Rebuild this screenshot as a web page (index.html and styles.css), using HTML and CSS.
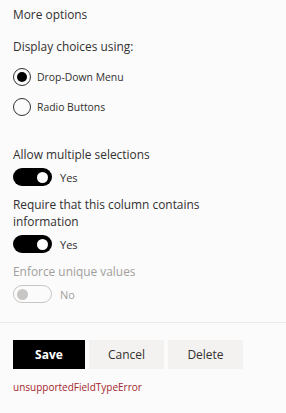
FILE: index.html
```html
<!DOCTYPE html>
<html>
<head>
<meta charset="utf-8">
<link rel="stylesheet" href="styles.css">
</head>
<body>
<div class="scroll">
  <div class="content">
    <div class="heading">More options</div>
    <div class="group-label">Display choices using:</div>
    <div class="choices">
      <div class="choice"><span class="radio checked"></span><span class="choice-text">Drop-Down Menu</span></div>
      <div class="choice"><span class="radio"></span><span class="choice-text">Radio Buttons</span></div>
    </div>
    <div class="field first">
      <div class="label">Allow multiple selections</div>
      <div class="toggle-row"><span class="toggle on"><span class="knob"></span></span><span class="state">Yes</span></div>
    </div>
    <div class="field">
      <div class="label">Require that this column contains information</div>
      <div class="toggle-row"><span class="toggle on"><span class="knob"></span></span><span class="state">Yes</span></div>
    </div>
    <div class="field disabled">
      <div class="label">Enforce unique values</div>
      <div class="toggle-row"><span class="toggle off"><span class="knob"></span></span><span class="state">No</span></div>
    </div>
  </div>
</div>
<div class="footer">
  <div class="buttons">
    <button class="btn primary">Save</button>
    <button class="btn">Cancel</button>
    <button class="btn">Delete</button>
  </div>
  <div class="error">unsupportedFieldTypeError</div>
</div>
</body>
</html>
```
FILE: styles.css
```css
html, body {
  margin: 0;
  padding: 0;
  background: #fbfbfb;
}
body {
  font-family: "Open Sans", "Noto Sans", sans-serif;
  color: #323130;
  font-size: 11.9px;
}
.scroll {
  height: 323px;
  overflow-y: scroll;
  border-bottom: 1px solid #e8e8e8;
  box-sizing: border-box;
}
.scroll::-webkit-scrollbar {
  width: 6px;
}
.scroll::-webkit-scrollbar-track {
  background: #ececec;
}
.scroll::-webkit-scrollbar-thumb {
  background: #c6c6c6;
  border-left: 2px solid #ececec;
}
.content {
  padding: 0 24px 19px 13px;
}
.heading {
  line-height: 18px;
  padding-top: 5px;
}
.group-label {
  line-height: 18px;
  margin-top: 14px;
}
.choices {
  margin-top: 12px;
  display: flex;
  flex-direction: column;
  gap: 10px;
}
.choice {
  display: flex;
  align-items: center;
  height: 20px;
}
.radio {
  width: 18px;
  height: 18px;
  border: 1px solid #323130;
  border-radius: 50%;
  box-sizing: border-box;
  position: relative;
  flex: none;
}
.radio.checked::after {
  content: "";
  position: absolute;
  left: 3px;
  top: 3px;
  width: 10px;
  height: 10px;
  border-radius: 50%;
  background: #000;
}
.choice-text {
  margin-left: 6px;
  font-size: 10.4px;
}
.field {
  margin-top: 9px;
}
.field.first {
  margin-top: 29px;
}
.label {
  line-height: 17px;
}
.toggle-row {
  display: flex;
  align-items: center;
  margin-top: 4px;
  height: 20px;
}
.toggle {
  width: 39px;
  height: 18px;
  border-radius: 10px;
  box-sizing: border-box;
  display: flex;
  align-items: center;
  padding: 0 4px;
}
.toggle.on {
  background: #000;
  justify-content: flex-end;
}
.toggle.off {
  border: 1px solid #c8c6c4;
  justify-content: flex-start;
  padding: 0 3px;
}
.knob {
  width: 11px;
  height: 11px;
  border-radius: 50%;
  background: #fff;
}
.toggle.off .knob {
  background: #c8c6c4;
}
.state {
  margin-left: 8px;
  font-size: 11px;
}
.disabled {
  color: #a19f9d;
}
.footer {
  padding: 17px 13px 0 13px;
}
.buttons {
  display: flex;
  gap: 4px;
}
.btn {
  font-family: inherit;
  font-size: 12px;
  height: 29px;
  width: 75px;
  border: none;
  background: #f3f2f1;
  color: #323130;
  padding: 0;
  border-radius: 0;
}
.btn.primary {
  width: 72px;
  background: #000;
  color: #fff;
  font-weight: 700;
}
.error {
  margin-top: 10px;
  color: #a4262c;
  font-size: 10px;
  line-height: 16px;
}
```
